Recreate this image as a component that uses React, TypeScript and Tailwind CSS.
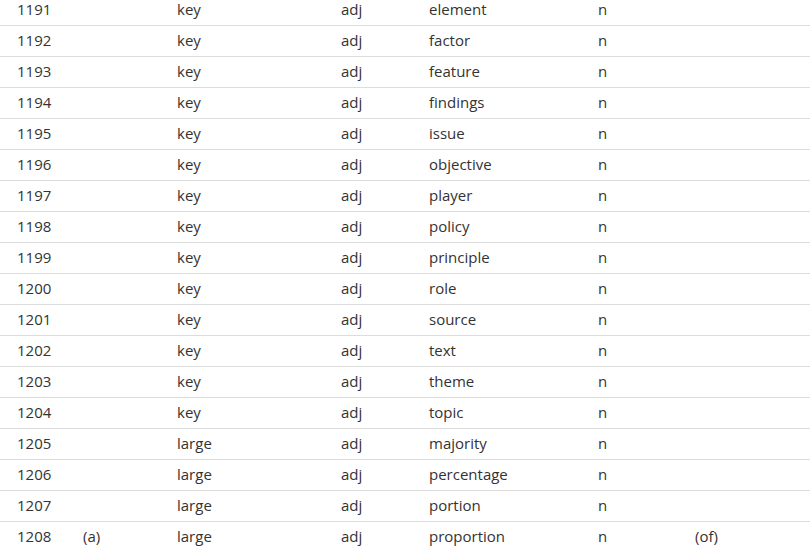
import React from "react";

const rows: [string, string, string, string, string, string, string][] = [
  ["1191", "", "key", "adj", "element", "n", ""],
  ["1192", "", "key", "adj", "factor", "n", ""],
  ["1193", "", "key", "adj", "feature", "n", ""],
  ["1194", "", "key", "adj", "findings", "n", ""],
  ["1195", "", "key", "adj", "issue", "n", ""],
  ["1196", "", "key", "adj", "objective", "n", ""],
  ["1197", "", "key", "adj", "player", "n", ""],
  ["1198", "", "key", "adj", "policy", "n", ""],
  ["1199", "", "key", "adj", "principle", "n", ""],
  ["1200", "", "key", "adj", "role", "n", ""],
  ["1201", "", "key", "adj", "source", "n", ""],
  ["1202", "", "key", "adj", "text", "n", ""],
  ["1203", "", "key", "adj", "theme", "n", ""],
  ["1204", "", "key", "adj", "topic", "n", ""],
  ["1205", "", "large", "adj", "majority", "n", ""],
  ["1206", "", "large", "adj", "percentage", "n", ""],
  ["1207", "", "large", "adj", "portion", "n", ""],
  ["1208", "(a)", "large", "adj", "proportion", "n", "(of)"],
];

export default function App() {
  return (
    <div
      className="w-[810px] h-[549px] overflow-hidden bg-white text-[#333] text-[15px]"
      style={{ fontFamily: '"Open Sans", "Noto Sans", sans-serif' }}
    >
      <div className="-mt-[5px]">
        {rows.map((r) => (
          <div
            key={r[0]}
            className="grid grid-cols-[66px_94px_164px_88px_169px_97px_1fr] h-[31px] items-center border-b border-[#dcdcdc] pl-[17px] pb-[2px]"
          >
            {r.map((c, i) => (
              <div key={i} className="leading-none whitespace-nowrap">
                {c}
              </div>
            ))}
          </div>
        ))}
      </div>
    </div>
  );
}
